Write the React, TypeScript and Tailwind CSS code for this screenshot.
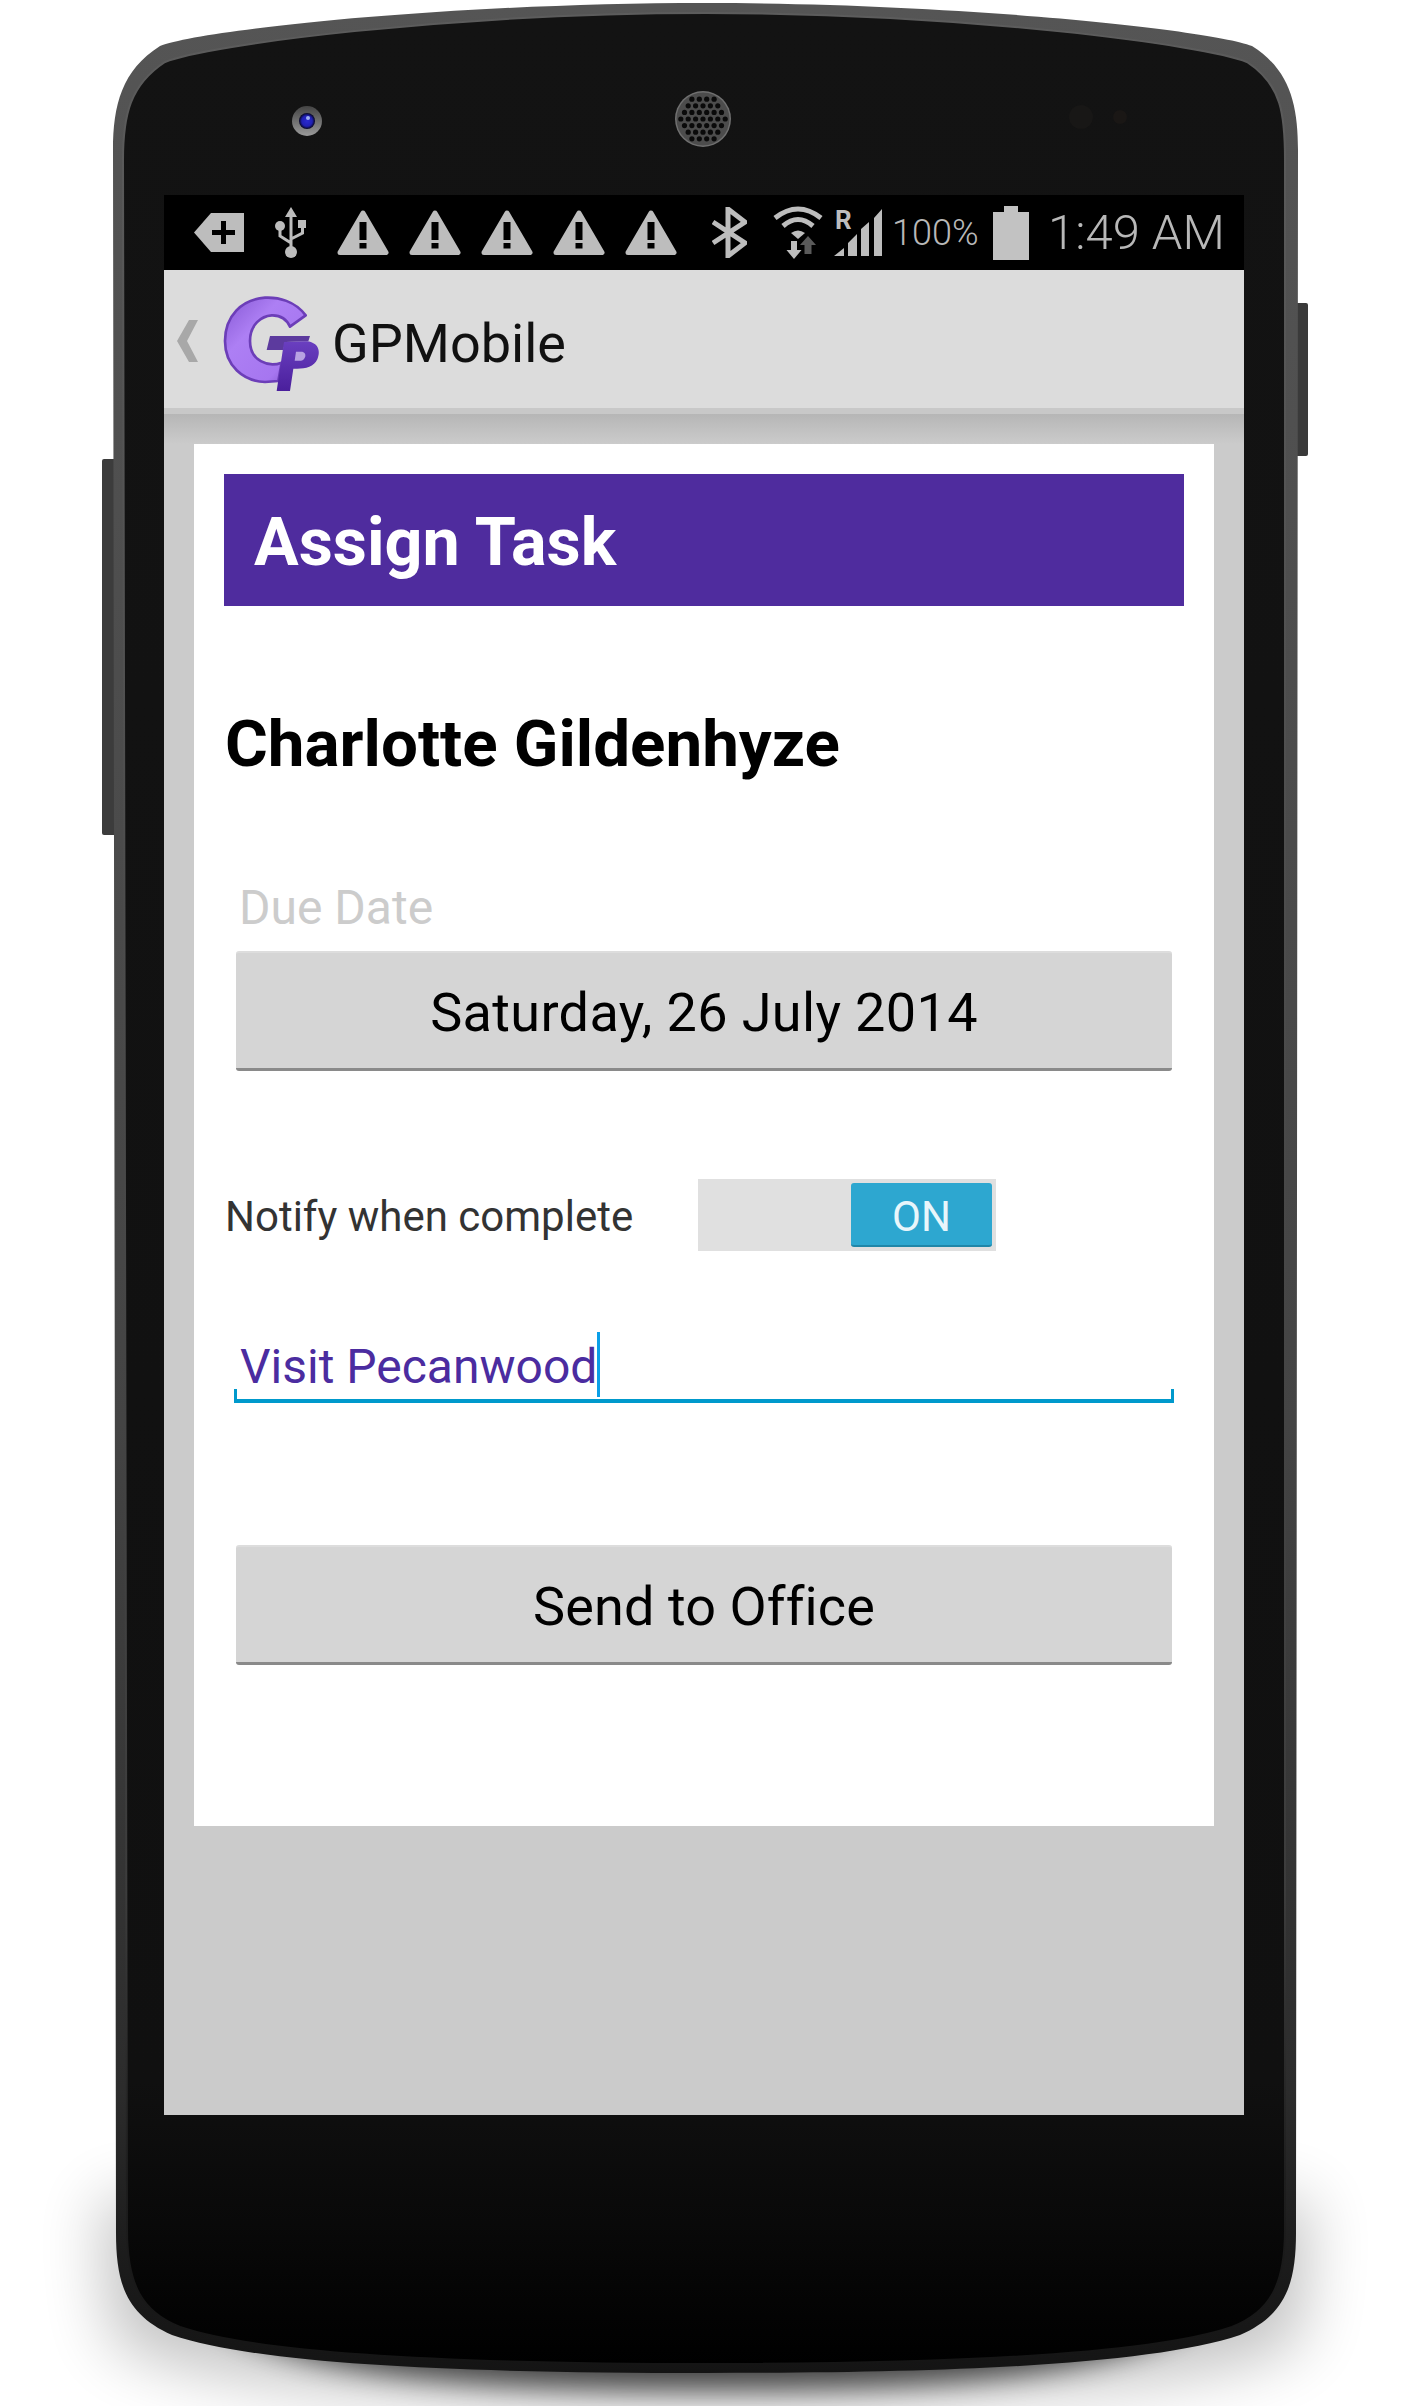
import React from 'react';

const grey = '#bdbdbd';

function PhoneBody() {
  // earpiece grille: staggered rows clipped to a circle
  const holes: { x: number; y: number }[] = [];
  for (let r = -3; r <= 3; r++) {
    for (let c = -4; c <= 4; c++) {
      const x = c * 7.4 + (r % 2 === 0 ? 0 : 3.7);
      const y = r * 6.6;
      if (Math.hypot(x, y) < 23) holes.push({ x, y });
    }
  }
  return (
    <svg className="absolute inset-0" width="1410" height="2406" viewBox="0 0 1410 2406">
      <defs>
        <linearGradient id="edge" x1="0" y1="0" x2="0" y2="1">
          <stop offset="0" stopColor="#555555" />
          <stop offset="0.6" stopColor="#444444" />
          <stop offset="0.88" stopColor="#2c2c2c" />
          <stop offset="0.95" stopColor="#1c1c1c" />
          <stop offset="1" stopColor="#141414" />
        </linearGradient>
        <linearGradient id="face" x1="0" y1="0" x2="0" y2="1">
          <stop offset="0" stopColor="#131313" />
          <stop offset="0.88" stopColor="#101010" />
          <stop offset="0.94" stopColor="#090909" />
          <stop offset="1" stopColor="#000000" />
        </linearGradient>
        <linearGradient id="highlight" x1="0" y1="0" x2="0" y2="1">
          <stop offset="0" stopColor="#5c5c5c" />
          <stop offset="0.8" stopColor="#3c3c3c" />
          <stop offset="0.92" stopColor="#1e1e1e" />
          <stop offset="1" stopColor="#151515" />
        </linearGradient>
        <radialGradient id="lens">
          <stop offset="0" stopColor="#2a2ad0" />
          <stop offset="0.65" stopColor="#2020b4" />
          <stop offset="1" stopColor="#05051c" />
        </radialGradient>
        <linearGradient id="ring" x1="0" y1="0" x2="0" y2="1">
          <stop offset="0" stopColor="#444444" />
          <stop offset="1" stopColor="#9a9a9a" />
        </linearGradient>
        <filter id="blurNear" filterUnits="userSpaceOnUse" x="0" y="1900" width="1410" height="506">
          <feGaussianBlur stdDeviation="14" />
        </filter>
        <filter id="blurFar" filterUnits="userSpaceOnUse" x="0" y="1900" width="1410" height="506">
          <feGaussianBlur stdDeviation="32" />
        </filter>
      </defs>

      {/* shadow under the phone */}
      <path d="M100 2200 L1310 2200 L1300 2340 C1200 2395 900 2400 706 2400 C512 2400 212 2395 112 2340 Z" fill="#000" opacity="0.24" filter="url(#blurFar)" />
      <path d="M200 2300 L1212 2300 C1150 2382 900 2390 706 2390 C512 2390 262 2382 200 2300 Z" fill="#000" opacity="0.65" filter="url(#blurNear)" />

      {/* side buttons */}
      <rect x="102" y="459" width="16" height="376" rx="2" fill="#3c3c3c" />
      <rect x="1292" y="303" width="16" height="153" rx="2" fill="#3a3a3a" />

      {/* body */}
      <path
        d="M113 150 C113 105 122 70 160 46 C200 30 450 3 706 3 C962 3 1212 30 1252 46 C1290 70 1298 105 1298 150 L1296 2233 C1296 2285 1285 2315 1240 2335 C1150 2365 950 2373 706 2373 C462 2373 262 2365 172 2335 C127 2315 116 2285 116 2233 Z"
        fill="url(#edge)"
      />
      <path
        d="M123 160 C123 115 130 85 165 62 C205 45 450 13 706 13 C962 13 1207 45 1247 62 C1282 85 1285 115 1285 160 L1285 2230 C1285 2285 1270 2312 1232 2327 C1150 2355 950 2364 706 2364 C462 2364 262 2355 180 2327 C142 2312 127 2285 127 2230 Z"
        fill="url(#face)"
        stroke="url(#highlight)"
        strokeWidth="2"
      />

      {/* front camera */}
      <circle cx="307" cy="121" r="15" fill="url(#ring)" />
      <circle cx="307" cy="121" r="8" fill="url(#lens)" />
      <circle cx="308" cy="118" r="2" fill="#a0b0f0" />

      {/* earpiece */}
      <circle cx="703" cy="119" r="28" fill="#707070" />
      <circle cx="703" cy="119" r="26.5" fill="#4c4c4c" />
      {holes.map((h, i) => (
        <circle key={i} cx={703 + h.x} cy={119 + h.y} r="2.6" fill="#0a0a0a" />
      ))}

      {/* sensors */}
      <circle cx="1081" cy="117" r="12" fill="#181716" />
      <circle cx="1120" cy="117" r="7" fill="#1a1715" />
    </svg>
  );
}

function TagIcon() {
  return (
    <svg width="50" height="39" viewBox="0 0 50 39" className="ml-[30px] shrink-0">
      <path d="M17 0 H50 V39 H17 L0 19.5 Z" fill={grey} />
      <path d="M18 17 H27 V8 H32 V17 H41 V22 H32 V31 H27 V22 H18 Z" fill="#000" />
    </svg>
  );
}

function UsbIcon() {
  return (
    <svg width="31" height="51" viewBox="0 0 31 51" className="ml-[31px] shrink-0">
      <path d="M16 0 L22 10 H10 Z" fill={grey} />
      <path d="M16 9 V42 M5 22 V29 L16 36 M27.5 19 V26 L16 32" stroke={grey} strokeWidth="3" fill="none" />
      <circle cx="16" cy="45" r="6" fill={grey} />
      <circle cx="5" cy="19" r="5" fill={grey} />
      <rect x="23" y="13" width="8" height="8" fill={grey} />
    </svg>
  );
}

function WarnIcon({ first }: { first?: boolean }) {
  return (
    <svg width="52" height="47" viewBox="0 0 52 47" className={first ? 'ml-[31px] shrink-0' : 'ml-[20px] shrink-0'}>
      <path d="M26 4 L49 43.5 H3 Z" fill={grey} stroke={grey} strokeWidth="5" strokeLinejoin="round" />
      <rect x="22.5" y="13" width="7" height="18" fill="#000" />
      <rect x="22.5" y="34" width="7" height="5.5" fill="#000" />
    </svg>
  );
}

function BluetoothIcon() {
  return (
    <svg width="35" height="51" viewBox="0 0 35 51" className="ml-[35px] shrink-0">
      <path d="M1 15 L33 36 L16 49 V2 L33 15 L1 36" fill="none" stroke={grey} strokeWidth="5" />
    </svg>
  );
}

function WifiIcon() {
  return (
    <svg width="50" height="53" viewBox="0 0 50 53" className="ml-[26px] shrink-0">
      <path d="M2 12 Q25 -6 48 12" fill="none" stroke={grey} strokeWidth="5" />
      <path d="M10 20 Q25 7 40 20" fill="none" stroke={grey} strokeWidth="5" />
      <path d="M18 27 Q25 22 32 27 L25 33 Z" fill={grey} />
      <path d="M35 30 L43 39 H38.5 V48 H31.5 V39 H27 Z" fill="#5a5a5a" />
      <path d="M21 53 L13.5 44 H18 V35 H24 V44 H28.5 Z" fill={grey} />
    </svg>
  );
}

function SignalIcon() {
  return (
    <svg width="48" height="52" viewBox="0 -4 48 52" className="mb-[4px] ml-[11px] shrink-0">
      <text x="1" y="20" fontSize="26" fontWeight="700" fontFamily="Roboto, sans-serif" fill={grey}>
        R
      </text>
      <path d="M0 47 L10 39 V47 Z M14 47 V34 L23 25 V47 Z M27 47 V20 L35 13 V47 Z M40 47 V9 L48 0 V47 Z" fill={grey} />
    </svg>
  );
}

function Logo() {
  return (
    <svg width="115" height="110" viewBox="0 0 345 330" className="ml-[17px] shrink-0">
      <defs>
        <linearGradient id="gFill" x1="0" y1="0" x2="1" y2="1">
          <stop offset="0" stopColor="#8658d4" />
          <stop offset="0.35" stopColor="#ad7ff4" />
          <stop offset="0.75" stopColor="#a676f0" />
          <stop offset="1" stopColor="#7444c0" />
        </linearGradient>
        <linearGradient id="pFill" x1="0" y1="0" x2="0" y2="1">
          <stop offset="0" stopColor="#6a3fc0" />
          <stop offset="1" stopColor="#4a1f9c" />
        </linearGradient>
      </defs>
      <path
        d="M272 88 C240 45 190 33 150 35 C80 40 30 90 30 165 C30 240 85 285 150 288 L190 285 L200 230 C160 245 105 225 105 165 C105 115 140 90 170 88 C195 87 215 100 225 122 Z"
        fill="url(#gFill)"
        stroke="#6c3eb8"
        strokeWidth="8"
        strokeLinejoin="round"
      />
      <path d="M165 150 H285 L280 166 L212 168 L204 192 H155 Z" fill="#5c3a9e" />
      <path d="M207 168 L270 166 C305 166 320 190 307 220 C296 245 265 250 235 248 L225 315 L185 315 Z" fill="url(#pFill)" />
      <path d="M243 197 H262 C277 200 272 222 258 224 H239 Z" fill="#b8a2e2" />
    </svg>
  );
}

function GreyButton({ label, wide }: { label: string; wide?: boolean }) {
  return (
    <div
      className={`ml-[42px] flex h-[120px] w-[936px] items-center justify-center rounded-[3px] border-t-[2px] border-b-[3px] border-t-[#dddddd] border-b-[#8a8a8a] bg-[#d5d5d5] pt-[3px] text-[54px] text-black ${
        wide ? 'tracking-[0.35px]' : 'tracking-[0.1px]'
      }`}
    >
      {label}
    </div>
  );
}

export default function App() {
  return (
    <div className="relative h-[2406px] w-[1410px] overflow-hidden bg-white font-['Roboto',sans-serif]">
      <PhoneBody />
      <div className="relative pl-[164px] pt-[195px]">
        <div className="flex h-[1920px] w-[1080px] flex-col bg-[#cbcbcb]">
          {/* status bar */}
          <div className="flex h-[75px] items-center bg-black text-[#b8b8b8]">
            <TagIcon />
            <UsbIcon />
            <WarnIcon first />
            <WarnIcon />
            <WarnIcon />
            <WarnIcon />
            <WarnIcon />
            <BluetoothIcon />
            <WifiIcon />
            <SignalIcon />
            <span className="ml-[10px] w-[88px] shrink-0 text-[36px] font-light">100%</span>
            <div className="ml-[13px] flex shrink-0 flex-col items-center">
              <div className="h-[6px] w-[14px] bg-[#c2c2c2]" />
              <div className="h-[48px] w-[36px] bg-[#c2c2c2]" />
            </div>
            <span className="ml-[19px] shrink-0 text-[49px] font-light">1:49 AM</span>
          </div>

          {/* action bar */}
          <div className="flex h-[138px] items-center bg-[#dcdcdc] pt-[3px]">
            <svg width="21" height="42" viewBox="0 0 21 42" className="ml-[13px] shrink-0">
              <path d="M12 0 H21 L10 21 L21 42 H12 L0 21 Z" fill="#a8a8a8" />
            </svg>
            <Logo />
            <span className="ml-[2px] mt-[6px] text-[54px] text-[#111111]">GPMobile</span>
          </div>
          <div className="h-[6px] bg-[#c8c8c8]" />

          {/* content */}
          <div className="bg-[linear-gradient(#b6b6b6,#cbcbcb_30px)] pl-[30px] pt-[30px]">
            <div className="h-[1382px] w-[1020px] bg-white pt-[30px]">
              <div className="ml-[30px] flex h-[132px] w-[960px] items-center bg-[#4f2c9e] pl-[30px] pt-[6px] text-[66.5px] font-bold text-white">
                Assign Task
              </div>
              <div className="ml-[31px] mt-[106px] h-[64px] text-[65.5px] font-bold leading-[64px] text-black">
                Charlotte Gildenhyze
              </div>
              <div className="ml-[45px] mt-[107px] h-[50px] text-[48px] leading-[50px] text-[#cccccc]">Due Date</div>
              <div className="mt-[18px]">
                <GreyButton label="Saturday, 26 July 2014" wide />
              </div>
              <div className="ml-[31px] mt-[108px] flex h-[72px] items-center">
                <span className="mt-[3px] w-[473px] shrink-0 text-[42px] text-[#333333]">Notify when complete</span>
                <div className="flex h-[72px] w-[298px] items-center justify-end bg-[#e0e0e0] pr-[4px]">
                  <div className="flex h-[64px] w-[141px] items-center justify-center rounded-[3px] border-b-[2px] border-b-[#1f86a8] bg-[#2da7d0] pt-[4px] text-[42px] text-[#e8f6fb]">
                    ON
                  </div>
                </div>
              </div>
              <div className="relative ml-[40px] mt-[81px] flex h-[71px] w-[940px] items-center border-b-[4px] border-b-[#0099cc] pl-[6px]">
                <span className="mt-[3px] text-[48px] text-[#4b2ca0]">Visit Pecanwood</span>
                <span className="h-[65px] w-[3px] self-start bg-[#0a9fe8]" />
                <span className="absolute bottom-0 left-0 h-[10px] w-[3px] bg-[#0099cc]" />
                <span className="absolute bottom-0 right-0 h-[10px] w-[3px] bg-[#0099cc]" />
              </div>
              <div className="mt-[142px]">
                <GreyButton label="Send to Office" />
              </div>
            </div>
          </div>
        </div>
      </div>
    </div>
  );
}
